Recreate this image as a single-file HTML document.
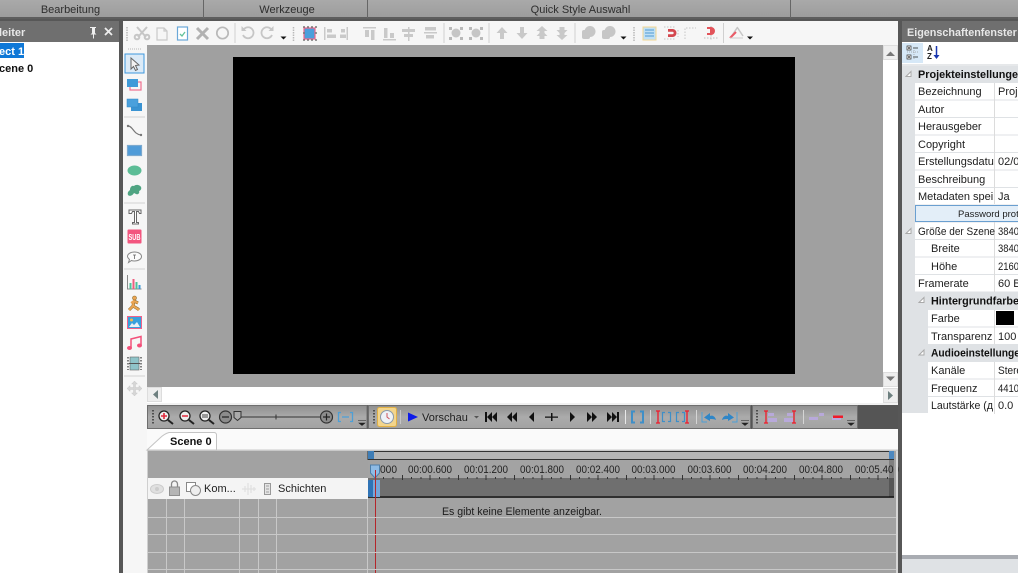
<!DOCTYPE html>
<html><head><meta charset="utf-8"><title>Editor</title>
<style>
html,body{margin:0;padding:0;width:1018px;height:573px;overflow:hidden;background:#575757}
svg{display:block;position:absolute;left:0;top:0;filter:blur(.35px)}
text{font-family:"Liberation Sans",sans-serif;font-size:11px;fill:#1d1d1d}
.b{font-weight:bold}
.m{text-anchor:middle}
.g{fill:#c9c9c9}
.gs{fill:none;stroke:#c9c9c9}
</style></head><body>
<svg width="1018" height="573" viewBox="0 0 1018 573">
<defs>
<linearGradient id="tb" x1="0" y1="0" x2="0" y2="1"><stop offset="0" stop-color="#8f8f8f"/><stop offset=".5" stop-color="#ababab"/><stop offset="1" stop-color="#a2a2a2"/></linearGradient>
<linearGradient id="top" x1="0" y1="0" x2="0" y2="1"><stop offset="0" stop-color="#a9a9a9"/><stop offset="1" stop-color="#9c9c9c"/></linearGradient>
</defs>
<rect width="1018" height="573" fill="#575757"/>
<!-- top ribbon -->
<rect width="1018" height="18" fill="url(#top)"/>
<rect y="17" width="1018" height="2" fill="#5e5e5e"/>
<rect x="203" width="1" height="18" fill="#666"/><rect x="367" width="1" height="18" fill="#666"/><rect x="790" width="1" height="18" fill="#666"/>
<text x="70.500" y="13" class="m" style="fill:#2e2e2e">Bearbeitung</text>
<text x="287" y="13" class="m" style="fill:#2e2e2e">Werkzeuge</text>
<text x="580.500" y="13" class="m" style="fill:#2e2e2e">Quick Style Auswahl</text>
<!-- left panel -->
<rect y="21" width="119" height="21" fill="#6f6f6f"/>
<rect y="42" width="119" height="531" fill="#fff"/>
<text x="-1" y="36" class="b" style="fill:#e8e8e8">leiter</text>
<path d="M90 27h6v1h-1v5l1.500 1.500h-2.500v4h-1v-4h-2.500L92 33v-5h-2z" fill="#eee"/>
<path d="M105 28l7 7m0-7l-7 7" stroke="#eee" stroke-width="1.800"/>
<rect y="43" width="24" height="15" fill="#0f78d7"/>
<text x="-1" y="55" class="b" style="fill:#fff">ect 1</text>
<text x="-1" y="72" class="b" style="fill:#111">cene 0</text>
<!-- top toolbar -->
<rect x="123" y="21" width="775" height="24" fill="#f6f6f6"/>
<path d="M127 27v14M293.500 27v14M634 27v14" stroke="#b9b9b9" stroke-width="1.500" stroke-dasharray="1.500 1"/>
<!-- scissors -->
<g fill="none" stroke="#c6c6c6" stroke-width="2"><path d="M137 27l9 10M147 27l-9 10"/><circle cx="137" cy="37" r="2.300"/><circle cx="147" cy="37" r="2.300"/></g>
<path class="gs" d="M157 28h7l3 3v9h-10z M164 28v3h3" stroke-width="1.200"/>
<rect x="177.500" y="27" width="10" height="13" fill="#fff" stroke="#6aa8d8" stroke-width="1.200"/><path d="M180 34l2 2 3-4" fill="none" stroke="#63c29a" stroke-width="1.300"/>
<path d="M197 28l11 11m0-11l-11 11" stroke="#b2b2b2" stroke-width="3"/>
<circle cx="222.500" cy="33" r="5.700" fill="none" stroke="#b9b9b9" stroke-width="1.700"/>
<rect x="234.500" y="23" width="1" height="20" fill="#d0d0d0"/>
<path d="M244 29a5.500 5.500 0 1 1-1 6" fill="none" stroke="#c6c6c6" stroke-width="1.800"/><path d="M241.500 26v5h5z" fill="#c6c6c6"/>
<path d="M271 29a5.500 5.500 0 1 0 1 6" fill="none" stroke="#c6c6c6" stroke-width="1.800"/><path d="M273.500 26v5h-5z" fill="#c6c6c6"/>
<path d="M280.500 36.500h6l-3 3z" fill="#111"/>
<rect x="304" y="28" width="11" height="11" fill="#4b9fdb" stroke="#f0668a" stroke-width="1.200"/>
<path d="M303 27h14M303 33h2M315 33h2M303 40h14" stroke="#777" stroke-dasharray="2 2" stroke-width="1.500"/>
<g class="g">
<rect x="324" y="27" width="1.500" height="13"/><rect x="327" y="29" width="5" height="3.500"/><rect x="327" y="34.500" width="9" height="3.500"/>
<rect x="340" y="34.500" width="6" height="3.500"/><rect x="341" y="29" width="4" height="3.500"/><rect x="346.500" y="27" width="1.500" height="13"/>
<rect x="363" y="27" width="13" height="1.500"/><rect x="365" y="30" width="4" height="7"/><rect x="371" y="30" width="3.500" height="10"/>
<rect x="383" y="39" width="13" height="1.500"/><rect x="384" y="28" width="3.500" height="10"/><rect x="390" y="33" width="4" height="5"/>
<rect x="408" y="27" width="1.500" height="14"/><rect x="402" y="29" width="13" height="3"/><rect x="404" y="34" width="9" height="3"/>
<rect x="424" y="32" width="13" height="1.500"/><rect x="425" y="27" width="11" height="3.500"/><rect x="426" y="35" width="8" height="3.500"/>
</g>
<g fill="#c6c6c6"><circle cx="456" cy="33" r="4.500"/><circle cx="476" cy="33" r="4.500"/></g>
<path d="M449 27h3v3h-3zM460 27h3v3h-3zM449 37h3v3h-3zM460 37h3v3h-3zM469 27h3v3h-3zM480 27h3v3h-3zM469 37h3v3h-3zM480 37h3v3h-3z" fill="#b9b9b9"/>
<rect x="443.500" y="23" width="1" height="20" fill="#d0d0d0"/><rect x="488.500" y="23" width="1" height="20" fill="#d0d0d0"/><rect x="574.500" y="23" width="1" height="20" fill="#d0d0d0"/><rect x="723" y="23" width="1" height="20" fill="#d0d0d0"/>
<g fill="#c9c9c9"><path d="M502 27l5.500 6h-3.500v6h-4v-6h-3.500z"/><path d="M522 39l5.500-6h-3.500v-6h-4v6h-3.500z"/><path d="M542 26l5.500 5h-3v2l3 3h-3v3h-5v-3h-3l3-3v-2h-3z"/><path d="M562 40l5.500-5h-3v-2l3-3h-3v-3h-5v3h-3l3 3v2h-3z"/></g>
<g fill="#c6c6c6"><rect x="582" y="30" width="8" height="9" rx="2"/><circle cx="590" cy="31.500" r="5.500"/><rect x="602" y="30" width="8" height="9" rx="2"/><circle cx="610" cy="31.500" r="5.500"/></g>
<path d="M620.500 36.500h6l-3 3z" fill="#111"/>
<rect x="643" y="27" width="13" height="13" fill="#bfe0f5" stroke="#f3d691"/><path d="M645 30h9M645 33h9M645 36h9" stroke="#4f9ad4"/>
<path d="M664 27h12M664 39h12M678 30v7" stroke="#c4c4c4" stroke-dasharray="1.500 1.500"/>
<path d="M668 29h4.500a4 4 0 0 1 0 8h-4.500v-2.800h4.500a1.200 1.200 0 0 0 0-2.400h-4.500z" fill="#d4474e"/>
<path d="M685 39V28h11" fill="none" stroke="#c5c5c5" stroke-dasharray="1.500 1.500"/>
<path d="M711 26v15M704 38h14" stroke="#bdbdbd" stroke-dasharray="1.500 1.500"/>
<path d="M707 27h4a4 4 0 0 1 0 8h-4v-2h3v-4h-3z" fill="#e2535a"/>
<path d="M737 27l6 9M737 28l-6 9" stroke="#c7c7c7" stroke-width="1.500" fill="none"/><path d="M730 38l6-6" stroke="#eb5a66" stroke-width="2"/>
<path d="M730 38h13" stroke="#ccc"/>
<path d="M747 36.500h6l-3 3z" fill="#111"/>
<!-- left tool strip -->
<rect x="123" y="45" width="24" height="528" fill="#f6f6f6"/>
<path d="M128 49h13" stroke="#b5b5b5" stroke-dasharray="1 1"/>
<rect x="125" y="54" width="19" height="19" fill="#dbeaf7" stroke="#3d98de"/>
<path d="M131 58v11l2.500-2.500 2 4 2-1-2-4 3.500-.5z" fill="#f2f2f2" stroke="#666"/>
<rect x="130" y="82" width="11" height="8" fill="none" stroke="#ef7090" stroke-width="1.200"/><rect x="127" y="79" width="11" height="8" fill="#3f9ad8"/>
<rect x="131" y="103" width="11" height="8" fill="#3a93d2"/><rect x="127" y="99" width="11" height="8" fill="#4aa0dc" stroke="#2f88c6" stroke-width=".5"/>
<rect x="124" y="116.500" width="21" height="1" fill="#d3d3d3"/>
<path d="M128 126c5 0 5 8 13 9" fill="none" stroke="#777" stroke-width="1.200"/><circle cx="128" cy="126" r="1.200" fill="#777"/><circle cx="141" cy="135" r="1.200" fill="#777"/>
<rect x="127.500" y="145.500" width="14" height="10" fill="#4f9bd8" stroke="#7ba9cf" stroke-width="1.200"/>
<ellipse cx="134.500" cy="170.500" rx="7" ry="5" fill="#5cbd96"/>
<path d="M128 195c-1-3 1-4 2-5 0-3 2-5 4-4 2-2 6-1 7 1 1 2-1 4-2 4 1 2-1 4-3 3l-2-1c-1 2-4 4-6 2z" fill="#4fa482"/>
<rect x="124" y="202.500" width="21" height="1" fill="#d3d3d3"/>
<path d="M129 210h12v3.500h-1.500l-1-2h-2v11h2v1.500h-6v-1.500h2v-11h-2l-1 2H129z" fill="#fff" stroke="#666" stroke-width="1"/>
<rect x="127.500" y="229.500" width="14" height="14" rx="1" fill="#f3567f"/><text x="128.500" y="240" textLength="12" lengthAdjust="spacingAndGlyphs" style="font-size:8px;fill:#fff;font-weight:bold">SUB</text>
<path d="M134.500 252c4 0 7 2 7 4.500s-3 4.500-7 4.500c-1 0-2 0-3-.5l-3 2 1-3c-1-1-2-2-2-3 0-2.500 3-4.500 7-4.500z" fill="#fbfbfb" stroke="#888"/><path d="M133 255h3M134.500 255v4" stroke="#666" stroke-width=".8"/>
<rect x="124" y="268.500" width="21" height="1" fill="#d3d3d3"/>
<path d="M127.500 275v14h14" fill="none" stroke="#888"/><rect x="129.500" y="283" width="2" height="6" fill="#4fc29b"/><rect x="132.500" y="279" width="2" height="10" fill="#ef5d7f"/><rect x="135.500" y="282" width="2" height="7" fill="#4fc29b"/><rect x="138.500" y="285" width="2" height="4" fill="#3f9ad8"/>
<g fill="none" stroke="#8a6a2a" stroke-width="3"><path d="M134 301l-1 5-4 4M133 306l5 3 1 1M134 301l4 2"/></g>
<g fill="none" stroke="#eba553" stroke-width="2"><path d="M134 300l-1 6-4 4M133 306l5 3 1 1M134 301l4 2M134 301l-3 2"/></g><circle cx="134.500" cy="298" r="2" fill="#eba553" stroke="#8a6a2a" stroke-width=".6"/>
<rect x="127.500" y="316.500" width="14" height="12" fill="#37a0dc" stroke="#f0628a"/><path d="M129 327l3-4 2 2 3-3 3 5z" fill="#e8f2f7"/><circle cx="131.500" cy="320" r="1.500" fill="#f0b84c"/>
<path d="M131 348v-9l10-2.500v8.500" fill="none" stroke="#f3507a" stroke-width="1.500"/><ellipse cx="129.500" cy="348" rx="2.500" ry="2" fill="#f3507a"/><ellipse cx="139.500" cy="345.500" rx="2.500" ry="2" fill="#f3507a"/>
<rect x="130" y="357" width="9" height="13" fill="#8fc4c9" stroke="#666" stroke-width=".6"/><path d="M128 357v13M141 357v13" stroke="#666" stroke-width="1.600" stroke-dasharray="1.500 1.500"/><path d="M129 363.500h11" stroke="#555"/>
<rect x="124" y="375.500" width="21" height="1" fill="#d3d3d3"/>
<path d="M134.500 381l3 3h-2v3.500h3.500v-2l3 3-3 3v-2h-3.500v3.500h2l-3 3-3-3h2v-3.500H130v2l-3-3 3-3v2h3.500V384h-2z" fill="#d6d6d6" stroke="#c9c9c9" stroke-width=".5"/>
<!-- canvas -->
<rect x="147" y="45" width="736" height="342" fill="#a0a0a0"/>
<rect x="233" y="57" width="562" height="317" fill="#000"/>
<!-- scrollbars -->
<rect x="883" y="45" width="15" height="342" fill="#fff"/>
<rect x="883.500" y="45.500" width="14" height="14" fill="#eee" stroke="#ddd"/><path d="M886 56l4.500-4.500 4.500 4.500z" fill="#777"/>
<rect x="883.500" y="372.500" width="14" height="14" fill="#eee" stroke="#ddd"/><path d="M886 376.500l4.500 4.500 4.500-4.500z" fill="#777"/>
<rect x="147" y="387" width="751" height="16" fill="#fff"/>
<rect x="147.500" y="387.500" width="14" height="14" fill="#eee" stroke="#ddd"/><path d="M158 390v9l-5-4.500z" fill="#6d7f7f"/>
<rect x="883.500" y="388.500" width="14" height="14" fill="#eee" stroke="#ddd"/><path d="M888 391v9l5-4.500z" fill="#6d7f7f"/>
<rect x="147" y="403" width="751" height="2" fill="#f1f1f1"/>
<!-- timeline toolbars -->
<rect x="147" y="405" width="751" height="24" fill="#555"/>
<rect x="147.500" y="405.500" width="219.500" height="23" fill="url(#tb)" stroke="#6e6e6e"/>
<rect x="368.500" y="405.500" width="382" height="23" fill="url(#tb)" stroke="#6e6e6e"/>
<rect x="752.500" y="405.500" width="105" height="23" fill="url(#tb)" stroke="#6e6e6e"/>
<path d="M153 410v15M374 410v15M757 410v15" stroke="#333" stroke-width="1.500" stroke-dasharray="1.500 1.500"/>
<g fill="#eee" stroke="#222" stroke-width="1.300"><circle cx="164" cy="416" r="5"/><circle cx="185" cy="416" r="5"/><circle cx="205" cy="416" r="5"/></g>
<path d="M168 420l5 4M189 420l5 4M209 420l5 4" stroke="#222" stroke-width="2"/>
<path d="M161 416h6M164 413v6M182 416h6" stroke="#e02a3d" stroke-width="1.600"/><rect x="202" y="414" width="6" height="4" fill="#999"/>
<circle cx="225.500" cy="417" r="6" fill="#8c8c8c" stroke="#333" stroke-width="1.200"/><path d="M222 417h7" stroke="#222" stroke-width="1.200"/>
<path d="M238 417h82" stroke="#333" stroke-width="1"/><path d="M276 414.500v5" stroke="#333"/>
<path d="M234 411.500h7v6l-3.500 3-3.500-3z" fill="#aaa" stroke="#333"/>
<circle cx="326.500" cy="417" r="6" fill="#8c8c8c" stroke="#333" stroke-width="1.200"/><path d="M323 417h7M326.500 413.500v7" stroke="#222" stroke-width="1.200"/>
<path d="M341 412.500h-2.500v9h2.500M350 412.500h2.500v9H350M342 417h7" fill="none" stroke="#4d9fd6" stroke-width="1.300"/>
<path d="M358 420.500h8M359 423h6l-3 2.500z" fill="#222" stroke="#222" stroke-width=".6"/>
<rect x="377.500" y="407.500" width="19" height="19" rx="2" fill="#f3d58c" stroke="#e0b045"/><circle cx="387" cy="417" r="6.500" fill="#eef2f6" stroke="#8a9aab"/><path d="M387 413v4l2.500 2" stroke="#d0565c" fill="none"/>
<rect x="400" y="410" width="1" height="14" fill="#c5c5c5"/>
<path d="M408 412.500l10 4.500-10 4.500z" fill="#0d1be8"/>
<text x="422" y="421" style="fill:#1e1e1e">Vorschau</text>
<path d="M474 416h5l-2.500 2.500z" fill="#555"/>
<g fill="#111">
<path d="M485 412h2v10h-2zM492 412v10l-5-5zM497 412v10l-5-5z"/>
<path d="M512 412v10l-5-5zM517 412v10l-5-5z"/>
<path d="M534 412v10l-5-5z"/>
<path d="M545 416.500h13v1.200h-13zM551 413h1.500v8H551z"/>
<path d="M570 412v10l5-5z"/>
<path d="M587 412v10l5-5zM592 412v10l5-5z"/>
<path d="M607 412v10l5-5zM612 412v10l5-5zM617 412h2v10h-2z"/>
</g>
<rect x="625" y="410" width="1" height="14" fill="#e8e8e8"/>
<path d="M635 411.500h-3v11h3M640 411.500h3v11h-3" fill="none" stroke="#3e8fc8" stroke-width="2"/>
<rect x="650" y="410" width="1" height="14" fill="#d5d5d5"/>
<path d="M656 411h4M656 423h4M658 411v12" stroke="#f01a2a" stroke-width="1.300"/><path d="M665 412.500h-2.500v9h2.500M668 412.500h2.500v9H668" fill="none" stroke="#3e8fc8" stroke-width="1.200"/>
<path d="M685 411h4M685 423h4M687 411v12" stroke="#f01a2a" stroke-width="1.300"/><path d="M679 412.500h-2.500v9h2.500M682 412.500h2.500v9H682" fill="none" stroke="#3e8fc8" stroke-width="1.200"/>
<rect x="696" y="410" width="1" height="14" fill="#d5d5d5"/>
<path d="M702 412v10h5" fill="none" stroke="#4d9fd6"/><path d="M716 420c-1-4-4-5-6-4v-3l-6 4.500 6 3.500v-2c2 0 4 0 6 1z" fill="#2f86c7"/>
<path d="M737 412v10h-5" fill="none" stroke="#4d9fd6"/><path d="M722 420c1-4 4-5 6-4v-3l6 4.500-6 3.500v-2c-2 0-4 0-6 1z" fill="#2f86c7"/>
<path d="M741 420.500h8M742 423h6l-3 2.500z" fill="#222" stroke="#222" stroke-width=".6"/>
<path d="M764 411h4M764 423h4M766 411v12" stroke="#f01a2a" stroke-width="1.300"/><rect x="768" y="413" width="6" height="3" fill="#b8a9da"/><rect x="768" y="418" width="9" height="4" fill="#b8a9da"/>
<path d="M792 411h4M792 423h4M794 411v12" stroke="#f01a2a" stroke-width="1.300"/><rect x="787" y="413" width="6" height="3" fill="#b8a9da"/><rect x="784" y="418" width="9" height="4" fill="#b8a9da"/>
<rect x="803" y="410" width="1" height="14" fill="#d5d5d5"/>
<rect x="809" y="417" width="9" height="3" fill="#b8a9da"/><rect x="819" y="413" width="5" height="3" fill="#b8a9da"/>
<rect x="832" y="417" width="9" height="3" fill="#b8a9da"/><rect x="833" y="415.500" width="10" height="2.500" fill="#f01a2a"/>
<path d="M847 420.500h8M848 423h6l-3 2.500z" fill="#222" stroke="#222" stroke-width=".6"/>
<!-- tab bar -->
<rect x="147" y="429" width="751" height="22" fill="#fafafa"/>
<rect x="147" y="449.500" width="751" height="1.500" fill="#c9c9c9"/>
<path d="M147 450L160 438q4-4 9-5.500h45q2 0 2.500 2V450z" fill="#fff" stroke="#c4c4c4"/>
<text x="170" y="445" class="b" style="fill:#111">Scene 0</text>
<!-- timeline -->
<rect x="147" y="451" width="751" height="122" fill="#cfcfcf"/>
<rect x="148" y="451" width="748" height="122" fill="#a2a2a2"/>
<rect x="368" y="451.500" width="526" height="8" fill="#b6b6b6" stroke="#333"/>
<rect x="368" y="451" width="6" height="8" fill="#3e7db6"/>
<rect x="889" y="451" width="6" height="8" fill="#4d88bf"/>
<rect x="368" y="460" width="526" height="19" fill="#a3a3a3"/>
<rect x="368" y="478" width="526" height="19" fill="#6f6f6f"/>
<rect x="368" y="496" width="526" height="2" fill="#2f2f2f"/>
<rect x="889" y="460" width="5" height="37" fill="#000" opacity=".22"/>
<text x="380" y="473" textLength="17" lengthAdjust="spacingAndGlyphs" style="fill:#222">000</text>
<text x="408" y="473" textLength="44" lengthAdjust="spacingAndGlyphs" style="fill:#222">00:00.600</text>
<text x="464" y="473" textLength="44" lengthAdjust="spacingAndGlyphs" style="fill:#222">00:01.200</text>
<text x="520" y="473" textLength="44" lengthAdjust="spacingAndGlyphs" style="fill:#222">00:01.800</text>
<text x="576" y="473" textLength="44" lengthAdjust="spacingAndGlyphs" style="fill:#222">00:02.400</text>
<text x="631.500" y="473" textLength="44" lengthAdjust="spacingAndGlyphs" style="fill:#222">00:03.000</text>
<text x="687.500" y="473" textLength="44" lengthAdjust="spacingAndGlyphs" style="fill:#222">00:03.600</text>
<text x="743" y="473" textLength="44" lengthAdjust="spacingAndGlyphs" style="fill:#222">00:04.200</text>
<text x="799" y="473" textLength="44" lengthAdjust="spacingAndGlyphs" style="fill:#222">00:04.800</text>
<text x="855" y="473" textLength="44" lengthAdjust="spacingAndGlyphs" style="fill:#222">00:05.400</text>
<rect x="894" y="451" width="2" height="49" fill="#a2a2a2"/>
<rect x="896" y="451" width="2" height="122" fill="#d6d6d6"/>
<path d="M383.500 477v2M393 477v2M402.500 475v5M411.500 477v2M421 477v2M430 475v5M439.500 477v2M449 477v2M458.500 475v5M467.500 477v2M477 477v2M486 475v5M495.500 477v2M505 477v2M514.500 475v5M523.500 477v2M533 477v2M542 475v5M551.500 477v2M561 477v2M570.500 475v5M579.500 477v2M589 477v2M598 475v5M607.500 477v2M617 477v2M626.500 475v5M635.500 477v2M645 477v2M654 475v5M663.500 477v2M673 477v2M682.500 475v5M691.500 477v2M701 477v2M710 475v5M719.500 477v2M729 477v2M738.500 475v5M747.500 477v2M757 477v2M766 475v5M775.500 477v2M785 477v2M794.500 475v5M803.500 477v2M813 477v2M822 475v5M831.500 477v2M841 477v2M850.500 475v5M859.500 477v2M869 477v2M878 475v5M887.500 477v2" stroke="#333" stroke-width="1"/>
<rect x="148" y="478" width="220" height="21" fill="#f4f4f4"/>
<ellipse cx="157" cy="489" rx="6.500" ry="4.500" fill="#e0e0e0" stroke="#ccc"/><circle cx="157" cy="489" r="2" fill="#ccc"/>
<rect x="169.500" y="487" width="10" height="8.500" fill="#b5b5b5" stroke="#8f8f8f"/><path d="M171.500 487v-3a3 3 0 0 1 6 0v3" fill="none" stroke="#888" stroke-width="1.300"/>
<rect x="186.500" y="482.500" width="9" height="9" fill="#fff" stroke="#888"/><circle cx="195.500" cy="490.500" r="5" fill="#eee" stroke="#888"/>
<text x="204" y="492" style="fill:#222">Kom...</text>
<path d="M242 489h14M245 486v6M248 483v12M251 485v8M254 487v4" stroke="#ddd"/>
<rect x="264.500" y="483.500" width="6" height="11" fill="#e4e4e4" stroke="#999"/><path d="M266 486h3M266 489h3M266 492h3" stroke="#888" stroke-width=".7"/>
<text x="278" y="492" style="fill:#222">Schichten</text>
<rect x="368" y="480" width="12" height="17" rx="1" fill="#2f73b6"/>
<rect x="373" y="480" width="7" height="17" fill="#76a6d9"/>
<path d="M370.500 465h9v8l-4.500 5-4.500-5z" fill="#8ebbe5" stroke="#4d7ea9"/>
<path d="M375.500 470v103" stroke="#b4262b" stroke-width="1"/>
<g stroke="#c8c8c8" stroke-width="1"><path d="M148 517.500h748M148 534.500h748M148 552.500h748M148 569.500h748"/><path d="M166.500 499v74M184.500 499v74M239.500 499v74M258.500 499v74M276.500 499v74M367.500 499v74"/></g>
<text x="442" y="515" textLength="160" lengthAdjust="spacingAndGlyphs" style="fill:#1c1c1c">Es gibt keine Elemente anzeigbar.</text>
<!-- right panel -->
<rect x="902" y="21" width="116" height="21" fill="#6f6f6f"/>
<text x="907" y="36" class="b" style="fill:#e8e8e8;font-size:10.800px">Eigenschaftenfenster</text>
<rect x="902" y="42" width="116" height="531" fill="#fff"/>
<rect x="902" y="43" width="21" height="20" fill="#d6e8f7"/>
<path d="M907 46h4v4h-4zM907 55h4v4h-4z" fill="#fff" stroke="#333" stroke-width=".7"/><path d="M908 48h2M909 47v2M908 57h2M909 56v2M913 48h5M913 57h5" stroke="#222" stroke-width=".8"/><path d="M907 52h11M914 50v9" stroke="#999" stroke-width=".7" stroke-dasharray="1 1"/>
<text x="927" y="51" class="b" style="font-size:8px;fill:#222">A</text><text x="927" y="59" class="b" style="font-size:8px;fill:#222">Z</text>
<path d="M936.500 46v11" stroke="#1836b0" stroke-width="1.500"/><path d="M933.500 55h6l-3 4z" fill="#1836b0"/>
<rect x="902" y="64.500" width="116" height="1" fill="#cdd0d4"/>
<rect x="902" y="66" width="116" height="347" fill="#dfe2e5"/>
<!-- rows -->
<g fill="#fff">
<rect x="915" y="83" width="103" height="16.500"/><rect x="915" y="100.500" width="103" height="16.500"/><rect x="915" y="118" width="103" height="16.500"/><rect x="915" y="135.500" width="103" height="16.500"/><rect x="915" y="153" width="103" height="16.500"/><rect x="915" y="170.500" width="103" height="16.500"/><rect x="915" y="188" width="103" height="16.500"/>
<rect x="915" y="222.500" width="103" height="16.500"/><rect x="915" y="240" width="103" height="16.500"/><rect x="915" y="257.500" width="103" height="16.500"/><rect x="915" y="275" width="103" height="16.500"/>
<rect x="928" y="310" width="90" height="16.500"/><rect x="928" y="327.500" width="90" height="16.500"/>
<rect x="928" y="362" width="90" height="16.500"/><rect x="928" y="379.500" width="90" height="16.500"/><rect x="928" y="397" width="90" height="16.500"/>
</g>
<rect x="915.500" y="205.500" width="103" height="16" fill="#e3eef8" stroke="#6a9fd0"/>
<path d="M994.500 83v121M994.500 222v70M994.500 310v34M994.500 362v52" stroke="#dcdcdc"/>
<path d="M906 76.500l5-5v5z M906 233.500l5-5v5z M919 302.500l5-5v5z M919 355l5-5v5z" fill="#fff" stroke="#a9a9a9"/>
<text x="918" y="78" textLength="100" lengthAdjust="spacingAndGlyphs" class="b" style="fill:#111;font-size:11.300px">Projekteinstellunge</text>
<text x="931" y="304.500" textLength="88" lengthAdjust="spacingAndGlyphs" class="b" style="fill:#111;font-size:11.300px">Hintergrundfarbe</text>
<text x="931" y="356.500" textLength="89" lengthAdjust="spacingAndGlyphs" class="b" style="fill:#111;font-size:11.300px">Audioeinstellunge</text>
<text x="918" y="95">Bezeichnung</text><text x="998" y="95">Proj</text>
<text x="918" y="113">Autor</text>
<text x="918" y="130">Herausgeber</text>
<text x="918" y="148">Copyright</text>
<text x="918" y="165">Erstellungsdatu</text><text x="998" y="165">02/0</text>
<text x="918" y="183">Beschreibung</text>
<text x="918" y="200">Metadaten spei</text><text x="998" y="200">Ja</text>
<text x="958" y="217" style="font-size:9.500px">Password prot</text>
<text x="918" y="235" textLength="77" lengthAdjust="spacingAndGlyphs">Größe der Szene</text><text x="998" y="235" textLength="21" lengthAdjust="spacingAndGlyphs">3840</text>
<text x="931" y="252">Breite</text><text x="998" y="252" textLength="21" lengthAdjust="spacingAndGlyphs">3840</text>
<text x="931" y="270">Höhe</text><text x="998" y="270" textLength="21" lengthAdjust="spacingAndGlyphs">2160</text>
<text x="918" y="287">Framerate</text><text x="998" y="287">60 B</text>
<text x="931" y="322">Farbe</text><rect x="996" y="311" width="18" height="14" fill="#000"/>
<text x="931" y="340">Transparenz</text><text x="998" y="340">100</text>
<text x="931" y="374">Kanäle</text><text x="998" y="374" textLength="24" lengthAdjust="spacingAndGlyphs">Stere</text>
<text x="931" y="392">Frequenz</text><text x="998" y="392" textLength="21" lengthAdjust="spacingAndGlyphs">4410</text>
<text x="931" y="409" textLength="62" lengthAdjust="spacingAndGlyphs">Lautstärke (д</text><text x="998" y="409">0.0</text>
<rect x="902" y="414" width="116" height="141" fill="#fff"/>
<rect x="902" y="555" width="116" height="4" fill="#a9acb2"/>
<rect x="902" y="559" width="116" height="14" fill="#dfe2e5"/>
</svg>
</body></html>
